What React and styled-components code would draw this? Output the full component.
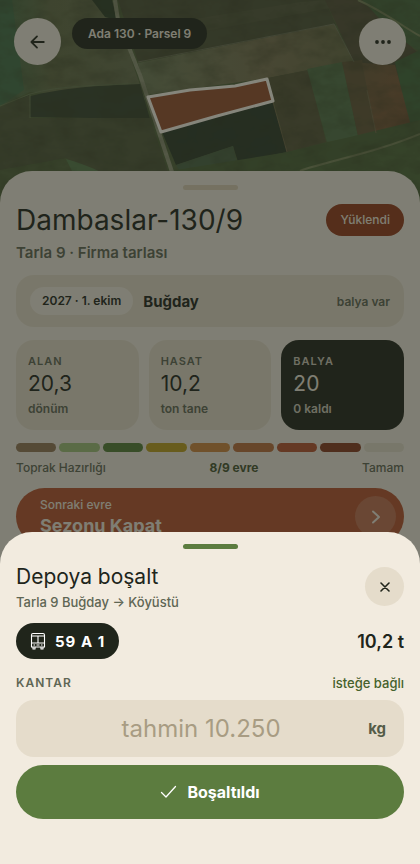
import React from "react";
import styled, { createGlobalStyle } from "styled-components";

const GlobalStyle = createGlobalStyle`
  * {
    box-sizing: border-box;
  }

  body {
    margin: 0;
    background-color: #f2ebdf;
    color: #20251b;
    font-family: Inter, "Liberation Sans", sans-serif;
  }

  button,
  input {
    font-family: inherit;
    color: inherit;
  }
`;

const Screen = styled.div`
  position: relative;
  height: 100vh;
  overflow: hidden;
`;

const MapArea = styled.div`
  position: relative;
  height: 203px;
  overflow: hidden;
  background-color: #5d6b44;
`;

const MapSvg = styled.svg`
  display: block;
  width: 100%;
  height: 100%;
`;

const MapBar = styled.header`
  position: absolute;
  top: 18px;
  left: 14px;
  right: 14px;
  display: flex;
  align-items: flex-start;
  gap: 11px;
`;

const RoundButton = styled.button`
  display: flex;
  align-items: center;
  justify-content: center;
  flex: none;
  width: ${(props) => props.$size}px;
  height: ${(props) => props.$size}px;
  padding: 0;
  border: none;
  border-radius: 50%;
  background-color: ${(props) => props.$bg};
`;

const ParcelChip = styled.div`
  height: 31px;
  line-height: 31px;
  margin-right: auto;
  padding: 0 16px;
  border-radius: 16px;
  background-color: #20251b;
  color: #f2ebdf;
  font-size: 12px;
  font-weight: 600;
`;

const FieldSheet = styled.main`
  position: relative;
  margin-top: -32px;
  padding: 14px 16px 40px;
  border-radius: 32px 32px 0 0;
  background-color: #f2ebdf;
`;

const Handle = styled.div`
  width: 55px;
  height: 5px;
  margin: 0 auto;
  border-radius: 3px;
  background-color: ${(props) => props.$color};
`;

const TitleRow = styled.div`
  display: flex;
  align-items: center;
  justify-content: space-between;
  margin-top: 12px;
`;

const FieldTitle = styled.h1`
  margin: 0;
  font-size: 28px;
  line-height: 36px;
  font-weight: 400;
`;

const StatusBadge = styled.span`
  height: 32px;
  line-height: 32px;
  padding: 0 14px;
  border-radius: 16px;
  background-color: #963b1c;
  color: #f2ebdf;
  font-size: 12px;
  font-weight: 500;
`;

const FieldSubtitle = styled.p`
  margin: 5px 0 0;
  font-size: 15px;
  line-height: 20px;
  font-weight: 600;
  color: #5f6654;
`;

const SeasonCard = styled.section`
  display: flex;
  align-items: center;
  height: 52px;
  margin-top: 12px;
  padding: 0 14px;
  border-radius: 18px;
  background-color: #e5dccb;
`;

const SeasonChip = styled.span`
  height: 28px;
  line-height: 28px;
  padding: 0 12px;
  border-radius: 14px;
  background-color: #f2ebdf;
  font-size: 12px;
  font-weight: 600;
`;

const Crop = styled.strong`
  margin-left: 10px;
  font-size: 15px;
  font-weight: 700;
`;

const BaleNote = styled.span`
  margin-left: auto;
  font-size: 12px;
  font-weight: 600;
  color: #5f6654;
`;

const Stats = styled.section`
  display: grid;
  grid-template-columns: repeat(3, 1fr);
  gap: 10px;
  margin-top: 13px;
`;

const StatCard = styled.div`
  height: 90px;
  padding: 14px 12px 0;
  border-radius: 18px;
  background-color: ${(props) => (props.$dark ? "#20251b" : "#e5dccb")};
  color: ${(props) => (props.$dark ? "#f2ebdf" : "#20251b")};
`;

const StatLabel = styled.div`
  font-size: 11px;
  line-height: 14px;
  font-weight: 600;
  letter-spacing: 1px;
  color: ${(props) => (props.$dark ? "#cfcabb" : "#5f6654")};
`;

const StatValue = styled.div`
  margin-top: 2px;
  font-size: 21px;
  line-height: 28px;
  font-weight: 400;
`;

const StatUnit = styled.div`
  margin-top: 3px;
  font-size: 12px;
  line-height: 16px;
  font-weight: 600;
  color: ${(props) => (props.$dark ? "#cfcabb" : "#5f6654")};
`;

const Stages = styled.div`
  display: flex;
  gap: 3px;
  margin-top: 13px;
`;

const Stage = styled.div`
  flex: 1;
  height: 9px;
  border-radius: 5px;
  background-color: ${(props) => props.$color};
`;

const StageLabels = styled.div`
  display: flex;
  justify-content: space-between;
  margin-top: 8px;
  font-size: 12px;
  line-height: 16px;
  font-weight: 500;
  color: #5f6654;
`;

const StageCount = styled.strong`
  font-weight: 700;
  color: #45542f;
`;

const NextButton = styled.button`
  display: flex;
  align-items: center;
  justify-content: space-between;
  width: 100%;
  height: 57px;
  margin-top: 12px;
  padding: 0 8px 0 24px;
  border: none;
  border-radius: 29px;
  background-color: #b9532f;
  color: #f2ebdf;
  text-align: left;
`;

const NextHint = styled.span`
  display: block;
  font-size: 12px;
  line-height: 16px;
  font-weight: 500;
`;

const NextTitle = styled.span`
  display: block;
  margin-top: 2px;
  font-size: 18px;
  line-height: 22px;
  font-weight: 700;
`;

const NextArrow = styled.span`
  display: flex;
  align-items: center;
  justify-content: center;
  width: 41px;
  height: 41px;
  border-radius: 50%;
  background-color: rgba(242, 235, 223, 0.2);
`;

const Backdrop = styled.div`
  position: absolute;
  inset: 0;
  display: flex;
  align-items: flex-end;
  background-color: rgba(32, 37, 27, 0.55);
`;

const UnloadSheet = styled.form`
  width: 100%;
  padding: 12px 16px 45px;
  border-radius: 32px 32px 0 0;
  background-color: #f2ebdf;
`;

const SheetHead = styled.div`
  display: flex;
  align-items: center;
  justify-content: space-between;
  margin-top: 14px;
`;

const SheetTitle = styled.h2`
  margin: 0;
  font-size: 21px;
  line-height: 28px;
  font-weight: 400;
`;

const SheetRoute = styled.p`
  margin: 3px 0 0;
  font-size: 13px;
  line-height: 16px;
  font-weight: 500;
  color: #5f6654;
`;

const LoadRow = styled.div`
  display: flex;
  align-items: center;
  justify-content: space-between;
  margin-top: 13px;
`;

const Plate = styled.div`
  display: flex;
  align-items: center;
  gap: 9px;
  height: 36px;
  padding: 0 14px;
  border-radius: 18px;
  background-color: #20251b;
  color: #ffffff;
  font-size: 15px;
  font-weight: 700;
  letter-spacing: 1px;
`;

const LoadWeight = styled.strong`
  font-size: 18px;
  font-weight: 600;
`;

const LabelRow = styled.div`
  display: flex;
  align-items: center;
  justify-content: space-between;
  margin-top: 15px;
  line-height: 18px;
`;

const ScaleLabel = styled.label`
  font-size: 12px;
  font-weight: 600;
  letter-spacing: 1px;
  color: #5f6654;
`;

const Optional = styled.span`
  font-size: 13px;
  font-weight: 500;
  color: #45612b;
`;

const WeightField = styled.div`
  display: flex;
  align-items: center;
  height: 57px;
  margin-top: 8px;
  padding: 0 18px;
  border-radius: 18px;
  background-color: #e5dccb;
`;

const WeightInput = styled.input`
  flex: 1;
  min-width: 0;
  padding: 0;
  border: none;
  outline: none;
  background: none;
  font-size: 24px;
  font-weight: 400;
  text-align: center;

  &::placeholder {
    color: #a89c83;
    opacity: 1;
  }
`;

const Unit = styled.span`
  font-size: 15px;
  font-weight: 700;
  color: #555c48;
`;

const SubmitButton = styled.button`
  display: flex;
  align-items: center;
  justify-content: center;
  gap: 10px;
  width: 100%;
  height: 54px;
  margin-top: 8px;
  border: none;
  border-radius: 27px;
  background-color: #5c7c3f;
  color: #ffffff;
  font-size: 16px;
  font-weight: 700;
`;

const STAGES = [
  "#947858",
  "#a0c07a",
  "#557f38",
  "#bfa11f",
  "#d0883e",
  "#bd6f3c",
  "#b9532f",
  "#873a1f",
  "#e2dcca",
];

const STATS = [
  { label: "ALAN", value: "20,3", unit: "dönüm" },
  { label: "HASAT", value: "10,2", unit: "ton tane" },
  { label: "BALYA", value: "20", unit: "0 kaldı", dark: true },
];

const Satellite = () => (
  <MapSvg viewBox="0 0 420 203" preserveAspectRatio="xMidYMid slice" aria-hidden="true">
    <defs>
      <filter id="grain" x="0" y="0" width="100%" height="100%" colorInterpolationFilters="sRGB">
        <feTurbulence type="fractalNoise" baseFrequency="0.04 0.07" numOctaves="4" seed="4" />
        <feColorMatrix values="0 0 0 0 0.2  0 0 0 0 0.22  0 0 0 0 0.12  0.7 0 0 0 -0.25" />
      </filter>
      <linearGradient id="west" x1="0" x2="1">
        <stop offset="0" stopColor="#4b7049" />
        <stop offset="0.35" stopColor="#636c47" />
        <stop offset="1" stopColor="#687050" />
      </linearGradient>
      <linearGradient id="stubble" x1="0" x2="1">
        <stop offset="0" stopColor="#6f7c59" />
        <stop offset="0.6" stopColor="#797252" />
        <stop offset="1" stopColor="#676a46" />
      </linearGradient>
      <linearGradient id="soil" x1="0" y1="0" x2="1" y2="1">
        <stop offset="0" stopColor="#6b5a3c" />
        <stop offset="0.6" stopColor="#7a5838" />
        <stop offset="1" stopColor="#6f4e31" />
      </linearGradient>
    </defs>
    <rect width="420" height="203" fill="#52643c" />
    <path d="M0 0H112L118 20L145 100L30 92L0 106Z" fill="url(#west)" />
    <path d="M0 0H12L24 90L0 106Z" fill="#44704a" />
    <path d="M118 0H325L336 25L138 62Z" fill="#4d5238" />
    <path d="M126 30L300 2L325 0L331 8L134 44Z" fill="#53583d" />
    <path d="M138 63L334 24L354 61L268 78L146 95Z" fill="url(#stubble)" />
    <path d="M325 0H362L420 55V110L354 62Z" fill="#524f38" />
    <path d="M362 0H420V52L395 35Z" fill="#48693f" />
    <path d="M395 62L420 50V132L410 128Z" fill="#42683d" />
    <path d="M0 106C45 88 90 86 140 84L150 119L30 117V95Z" fill="#37442f" />
    <path d="M0 107L30 95V118L150 118L168 172H80L66 158L0 170Z" fill="#50593b" />
    <path d="M66 159C80 163 96 169 106 175H74Z" fill="#577b4c" />
    <path d="M162 132L273 102L287 152L238 162L233 146L176 165Z" fill="#2c3a2a" />
    <path d="M176 165L233 146L237 162L210 172H180Z" fill="#4b6546" />
    <path d="M268 78L308 70L326 142L287 152Z" fill="#58573b" />
    <path d="M307 69L342 62L358 136L327 142Z" fill="#527249" />
    <path d="M342 62L362 60L376 132L358 136Z" fill="#625639" />
    <path d="M362 63L395 65L411 126L376 133Z" fill="url(#soil)" />
    <path d="M176 170L288 152L420 120V203H176Z" fill="#4b6338" />
    <path d="M290 172L420 135V203H290Z" fill="#4f683b" />
    <path d="M92 0H112L117 20L105 17Z" fill="#2d3e28" />
    <path d="M115 0L118 20L140 75L172 172" fill="none" stroke="#92977a" strokeWidth="4" />
    <path d="M358 0C385 12 400 25 420 36M300 171C330 160 370 155 420 134" fill="none" stroke="#7d895e" strokeWidth="2" />
    <path d="M138 62L334 24L354 62" fill="none" stroke="#70745a" strokeWidth="1" />
    <path d="M0 106L30 94C60 85 100 86 138 83M30 95V118" fill="none" stroke="#687853" strokeWidth="1" />
    <path d="M367 90L376 133M273 102L287 152" fill="none" stroke="#766a4b" strokeWidth="1" />
    <rect width="420" height="203" filter="url(#grain)" />
    <path
      d="M148 97L190 90L235 86L267 79L273 101L217 116L161 132Z"
      fill="#97502f"
      stroke="#fffaf0"
      strokeWidth="3"
      strokeLinejoin="round"
    />
  </MapSvg>
);

const App = () => {
  return (
    <Screen>
      <GlobalStyle />
      <MapArea>
        <Satellite />
        <MapBar>
          <RoundButton type="button" aria-label="Geri" $size={47} $bg="#f2ebdf">
            <svg width="16" height="16" viewBox="0 0 16 16" fill="none" stroke="currentColor" strokeWidth="1.8" strokeLinecap="round" strokeLinejoin="round">
              <path d="M13.8 8H1.4M7 2.4L1.4 8L7 13.6" />
            </svg>
          </RoundButton>
          <ParcelChip>Ada 130 · Parsel 9</ParcelChip>
          <RoundButton type="button" aria-label="Menü" $size={47} $bg="#f2ebdf">
            <svg width="18" height="6" viewBox="0 0 18 6" fill="currentColor">
              <circle cx="3" cy="3" r="1.9" />
              <circle cx="9" cy="3" r="1.9" />
              <circle cx="15" cy="3" r="1.9" />
            </svg>
          </RoundButton>
        </MapBar>
      </MapArea>

      <FieldSheet>
        <Handle $color="#dccfb6" />
        <TitleRow>
          <FieldTitle>Dambaslar-130/9</FieldTitle>
          <StatusBadge>Yüklendi</StatusBadge>
        </TitleRow>
        <FieldSubtitle>Tarla 9 · Firma tarlası</FieldSubtitle>
        <SeasonCard>
          <SeasonChip>2027 · 1. ekim</SeasonChip>
          <Crop>Buğday</Crop>
          <BaleNote>balya var</BaleNote>
        </SeasonCard>
        <Stats>
          {STATS.map((stat) => (
            <StatCard key={stat.label} $dark={stat.dark}>
              <StatLabel $dark={stat.dark}>{stat.label}</StatLabel>
              <StatValue>{stat.value}</StatValue>
              <StatUnit $dark={stat.dark}>{stat.unit}</StatUnit>
            </StatCard>
          ))}
        </Stats>
        <Stages>
          {STAGES.map((color) => (
            <Stage key={color} $color={color} />
          ))}
        </Stages>
        <StageLabels>
          <span>Toprak Hazırlığı</span>
          <StageCount>8/9 evre</StageCount>
          <span>Tamam</span>
        </StageLabels>
        <NextButton type="button">
          <span>
            <NextHint>Sonraki evre</NextHint>
            <NextTitle>Sezonu Kapat</NextTitle>
          </span>
          <NextArrow>
            <svg width="10" height="16" viewBox="0 0 10 16" fill="none" stroke="currentColor" strokeWidth="2" strokeLinecap="round" strokeLinejoin="round">
              <path d="M2 2.5L8 8L2 13.5" />
            </svg>
          </NextArrow>
        </NextButton>
      </FieldSheet>

      <Backdrop>
        <UnloadSheet onSubmit={(e) => e.preventDefault()}>
          <Handle $color="#5c7c3f" />
          <SheetHead>
            <div>
              <SheetTitle>Depoya boşalt</SheetTitle>
              <SheetRoute>Tarla 9 Buğday → Köyüstü</SheetRoute>
            </div>
            <RoundButton type="button" aria-label="Kapat" $size={39} $bg="#e5dccb">
              <svg width="10" height="10" viewBox="0 0 10 10" fill="none" stroke="currentColor" strokeWidth="1.6" strokeLinecap="round">
                <path d="M1 1L9 9M9 1L1 9" />
              </svg>
            </RoundButton>
          </SheetHead>
          <LoadRow>
            <Plate>
              <svg width="16" height="18" viewBox="0 0 16 18" fill="none" stroke="currentColor" strokeWidth="1.1" strokeLinejoin="round">
                <path d="M3 1.5H13Q14.5 1.5 14.5 3V15H1.5V3Q1.5 1.5 3 1.5ZM1.5 4H14.5M1.5 11H14.5M8 4V11M3 15V17H5V15M11 15V17H13V15" />
                <path d="M3.5 13H5M11 13H12.5M6.5 13H9.5" />
              </svg>
              59 A 1
            </Plate>
            <LoadWeight>10,2 t</LoadWeight>
          </LoadRow>
          <LabelRow>
            <ScaleLabel htmlFor="scale-weight">KANTAR</ScaleLabel>
            <Optional>isteğe bağlı</Optional>
          </LabelRow>
          <WeightField>
            <WeightInput id="scale-weight" inputMode="numeric" placeholder="tahmin 10.250" />
            <Unit>kg</Unit>
          </WeightField>
          <SubmitButton type="submit">
            <svg width="17" height="14" viewBox="0 0 17 14" fill="none" stroke="currentColor" strokeWidth="1.3" strokeLinecap="round" strokeLinejoin="round">
              <path d="M1.5 7.5L6 12L15.5 1.5" />
            </svg>
            Boşaltıldı
          </SubmitButton>
        </UnloadSheet>
      </Backdrop>
    </Screen>
  );
};

export default App;
